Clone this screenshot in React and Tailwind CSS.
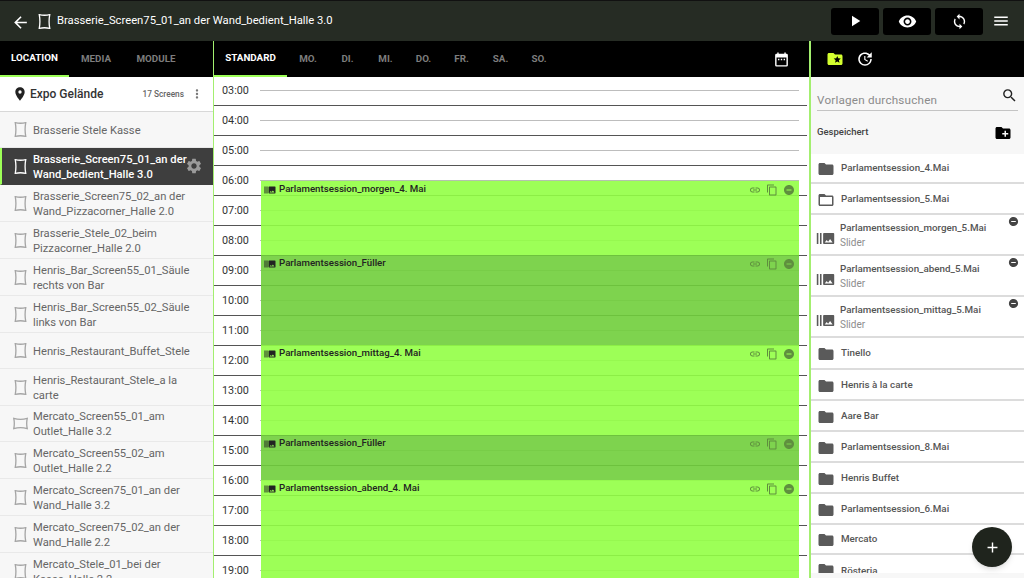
import React from 'react';
import {
  MdArrowBack, MdPlayArrow, MdVisibility, MdSync, MdMenu, MdPlace, MdMoreVert, MdSettings,
  MdFolderSpecial, MdUpdate, MdSearch, MdCreateNewFolder, MdFolder, MdFolderOpen,
  MdBurstMode, MdLink, MdContentCopy, MdRemoveCircle, MdAdd,
} from 'react-icons/md';

const screens = [
  ['Brasserie Stele Kasse', 'p', 'h-[36px]'],
  ['Brasserie_Screen75_01_an der Wand_bedient_Halle 3.0', 'p', 'h-[37px]', true],
  ['Brasserie_Screen75_02_an der Wand_Pizzacorner_Halle 2.0', 'p', 'h-[37px]'],
  ['Brasserie_Stele_02_beim Pizzacorner_Halle 2.0', 'p', 'h-[37px]'],
  ['Henris_Bar_Screen55_01_Säule rechts von Bar', 'p', 'h-[37px]'],
  ['Henris_Bar_Screen55_02_Säule links von Bar', 'p', 'h-[37px]'],
  ['Henris_Restaurant_Buffet_Stele', 'p', 'h-[36px]'],
  ['Henris_Restaurant_Stele_a la carte', 'p', 'h-[37px]'],
  ['Mercato_Screen55_01_am Outlet_Halle 3.2', 'l', 'h-[36px]'],
  ['Mercato_Screen55_02_am Outlet_Halle 2.2', 'p', 'h-[37px]'],
  ['Mercato_Screen75_01_an der Wand_Halle 3.2', 'p', 'h-[37px]'],
  ['Mercato_Screen75_02_an der Wand_Halle 2.2', 'p', 'h-[37px]'],
  ['Mercato_Stele_01_bei der Kasse_Halle 2.2', 'p', 'h-[37px]'],
];

const hours = ['03:00', '04:00', '05:00', '06:00', '07:00', '08:00', '09:00', '10:00', '11:00', '12:00', '13:00', '14:00', '15:00', '16:00', '17:00', '18:00', '19:00'];

const events = [
  { title: 'Parlamentsession_morgen_4. Mai', top: 'top-[104px]', height: 'h-[74px]', color: 'bg-[#92ff44]/90 shadow-[0_-1px_0_#b5c2ae]' },
  { title: 'Parlamentsession_Füller', top: 'top-[178px]', height: 'h-[90px]', color: 'bg-[#70ce3b]/90' },
  { title: 'Parlamentsession_mittag_4. Mai', top: 'top-[268px]', height: 'h-[90px]', color: 'bg-[#92ff44]/90' },
  { title: 'Parlamentsession_Füller', top: 'top-[358px]', height: 'h-[45px]', color: 'bg-[#70ce3b]/90' },
  { title: 'Parlamentsession_abend_4. Mai', top: 'top-[403px]', height: 'h-[100px]', color: 'bg-[#92ff44]/90' },
];

const templates = [
  { name: 'Parlamentsession_4.Mai', type: 'folder', h: 'h-[30px]' },
  { name: 'Parlamentsession_5.Mai', type: 'open', h: 'h-[31px]' },
  { name: 'Parlamentsession_morgen_5.Mai', type: 'slider', h: 'h-[41px]' },
  { name: 'Parlamentsession_abend_5.Mai', type: 'slider', h: 'h-[41px]' },
  { name: 'Parlamentsession_mittag_5.Mai', type: 'slider', h: 'h-[41px]' },
  { name: 'Tinello', type: 'folder', h: 'h-[32px]' },
  { name: 'Henris à la carte', type: 'folder', h: 'h-[31px]' },
  { name: 'Aare Bar', type: 'folder', h: 'h-[31px]' },
  { name: 'Parlamentsession_8.Mai', type: 'folder', h: 'h-[31px]' },
  { name: 'Henris Buffet', type: 'folder', h: 'h-[31px]' },
  { name: 'Parlamentsession_6.Mai', type: 'folder', h: 'h-[31px]' },
  { name: 'Mercato', type: 'folder', h: 'h-[30px]' },
];

// bowed rectangle, the little screen glyph
const ScreenIcon = ({ landscape, className }) => (
  <svg viewBox="0 0 16 16" className={className} fill="none" stroke="currentColor" strokeWidth="1.4">
    {landscape
      ? <path d="M0.8 2.5 Q8 4.6 15.2 2.5 Q14 8 15.2 13.5 Q8 11.4 0.8 13.5 Q2 8 0.8 2.5 Z" />
      : <path d="M2.4 0.7 Q8 2 13.6 0.7 Q12.2 8 13.6 15.3 Q8 14 2.4 15.3 Q3.8 8 2.4 0.7 Z" />}
  </svg>
);

const CalendarIcon = ({ className }) => (
  <svg viewBox="0 0 24 24" className={className} fill="currentColor">
    <path d="M19 4h-1V2h-2v2H8V2H6v2H5a2 2 0 0 0-2 2v14a2 2 0 0 0 2 2h14a2 2 0 0 0 2-2V6a2 2 0 0 0-2-2zm0 16H5V9h14v11z" />
    <path d="M7 11h2v2H7zM11 11h2v2h-2zM15 11h2v2h-2z" />
  </svg>
);

const TopButton = ({ children }) => (
  <button className="w-[48px] h-[27px] bg-black rounded-[3px] flex items-center justify-center text-white">{children}</button>
);

const Tab = ({ label, active, className }) => (
  <div className={`h-full pt-[1px] flex items-center justify-center text-[9.8px] font-bold ${active ? 'text-white border-b-2 border-[#9dff57]' : 'text-[#7d7d7d]'} ${className}`}>
    {label}
  </div>
);

export default function App() {
  return (
    <div className="w-[1024px] h-[578px] overflow-hidden flex flex-col bg-white font-['Roboto',sans-serif]">
      <header className="h-[41px] shrink-0 bg-[#262c24] border-t border-[#111] flex items-center text-white">
        <MdArrowBack className="ml-[11px] mt-[3px] w-[19px] h-[19px]" />
        <ScreenIcon className="ml-[7px] w-[15px] h-[15px]" />
        <span className="ml-[5px] pt-[1px] text-[11.25px]">Brasserie_Screen75_01_an der Wand_bedient_Halle 3.0</span>
        <div className="ml-auto flex items-center gap-[4px]">
          <TopButton><MdPlayArrow className="w-[18px] h-[18px]" /></TopButton>
          <TopButton><MdVisibility className="w-[19px] h-[19px]" /></TopButton>
          <TopButton><MdSync className="w-[17px] h-[17px]" /></TopButton>
        </div>
        <MdMenu className="ml-[9px] mr-[14px] w-[18px] h-[18px]" />
      </header>

      <div className="flex-1 min-h-0 flex">
        {/* locations */}
        <aside className="w-[213px] shrink-0 flex flex-col bg-[#f7f7f7]">
          <div className="h-[36px] shrink-0 bg-black flex">
            <Tab label="LOCATION" active className="w-[69px]" />
            <Tab label="MEDIA" className="w-[54px]" />
            <Tab label="MODULE" className="w-[66px]" />
          </div>
          <div className="h-[35px] shrink-0 bg-white border-b border-[#d8d8d8] flex items-center">
            <MdPlace className="ml-[12px] w-[16px] h-[16px] text-[#222]" />
            <span className="ml-[2px] text-[12px] font-medium text-[#333]">Expo Gelände</span>
            <span className="ml-auto text-[8.3px] font-medium text-[#666]">17 Screens</span>
            <MdMoreVert className="ml-[6px] mr-[9px] w-[14px] h-[14px] text-[#777]" />
          </div>
          {screens.map(([name, shape, h, selected]) => (
            <div key={name} className={`${h} shrink-0 relative flex items-center border-b ${selected ? 'bg-[#3e3e3e] border-[#3e3e3e] border-l-2 border-l-[#9dff57] text-white font-medium' : 'border-[#e9e9e9] text-[#666]'}`}>
              <ScreenIcon landscape={shape === 'l'} className={`${selected ? 'ml-[11px] text-white' : 'ml-[13px] text-[#a5a5a5]'} w-[15px] h-[15px] shrink-0`} />
              <span className="ml-[5px] pt-[1px] text-[11.2px] leading-[15px] w-[160px]">{name}</span>
              {selected && <MdSettings className="absolute right-[10px] top-[9px] w-[18px] h-[18px] text-[#9a9a9a]" />}
            </div>
          ))}
        </aside>

        {/* week plan */}
        <main className="flex-1 min-w-0 flex flex-col border-l border-r-2 border-[#a3ef6f]">
          <div className="h-[36px] shrink-0 bg-black flex items-center">
            <Tab label="STANDARD" active className="w-[73px]" />
            <Tab label="MO." className="w-[42px]" />
            <Tab label="DI." className="w-[37px]" />
            <Tab label="MI." className="w-[39px]" />
            <Tab label="DO." className="w-[37px]" />
            <Tab label="FR." className="w-[39px]" />
            <Tab label="SA." className="w-[39px]" />
            <Tab label="SO." className="w-[38px]" />
            <CalendarIcon className="ml-auto mr-[19px] w-[17px] h-[17px] text-white" />
          </div>
          <div className="flex-1 min-h-0 overflow-hidden relative">
            <div className="-mt-[1px]">
              {hours.map((hour) => (
                <div key={hour} className="h-[30px] border-b border-[#555] mr-[2px] flex items-center">
                  <span className="w-[46px] pl-[8px] text-[10.8px] text-[#333] pt-[2px]">{hour}</span>
                  <div className="w-[539px] h-px bg-[#bdbdbd]" />
                </div>
              ))}
            </div>
            {events.map((event, i) => (
              <div key={i} className={`absolute left-[47px] w-[538px] ${event.top} ${event.height} ${event.color}`}>
                <div className="h-[16px] pt-[1px] flex items-center">
                  <MdBurstMode className="ml-[3px] w-[12px] h-[12px] text-[#222]" />
                  <span className="ml-[3px] text-[9.7px] font-medium text-[#222]">{event.title}</span>
                  <div className="ml-auto mr-[4px] flex items-center gap-[5px] text-[#5f8f3e]">
                    <MdLink className="w-[12px] h-[12px]" />
                    <MdContentCopy className="w-[12px] h-[12px]" />
                    <MdRemoveCircle className="w-[12px] h-[12px]" />
                  </div>
                </div>
              </div>
            ))}
          </div>
        </main>

        {/* templates */}
        <aside className="w-[213px] shrink-0 flex flex-col bg-[#f7f7f7] relative">
          <div className="h-[36px] shrink-0 bg-black flex items-center">
            <MdFolderSpecial className="ml-[15px] w-[18px] h-[18px] text-[#d4ff2f]" />
            <MdUpdate className="ml-[12px] w-[18px] h-[18px] text-white" />
          </div>
          <div className="mx-[6px] mt-[9px] h-[25px] shrink-0 border-b border-[#c4c4c4] flex items-center justify-between">
            <span className="text-[11.7px] text-[#8b8b8b] tracking-[0.2px] pt-[6px]">Vorlagen durchsuchen</span>
            <MdSearch className="w-[17px] h-[17px] text-[#222] -mt-[5px]" />
          </div>
          <div className="h-[43px] shrink-0 flex items-center justify-between pl-[6px] pr-[12px]">
            <span className="text-[9.5px] font-medium text-[#444]">Gespeichert</span>
            <MdCreateNewFolder className="w-[18px] h-[18px] text-black" />
          </div>
          {templates.map((item) => (
            <div key={item.name} className={`${item.h} shrink-0 relative bg-white border-b-2 border-[#dcdcdc] flex items-center`}>
              {item.type === 'folder' && <MdFolder className="ml-[6px] mt-[2px] w-[18px] h-[18px] text-[#5a5a5a]" />}
              {item.type === 'open' && <MdFolderOpen className="ml-[6px] mt-[2px] w-[18px] h-[18px] text-[#5a5a5a]" />}
              {item.type === 'slider' && <MdBurstMode className="ml-[5px] mt-[8px] w-[19px] h-[19px] text-[#5a5a5a]" />}
              {item.type === 'slider' ? (
                <div className="ml-[5px] pt-[1px] flex flex-col">
                  <span className="text-[9.8px] leading-[15px] font-medium text-[#555]">{item.name}</span>
                  <span className="text-[10px] leading-[15px] text-[#8d8d8d]">Slider</span>
                  <MdRemoveCircle className="absolute right-[5px] top-[1px] w-[11px] h-[11px] text-[#444]" />
                </div>
              ) : (
                <span className="ml-[6px] pt-[1px] text-[9.8px] font-medium text-[#555]">{item.name}</span>
              )}
            </div>
          ))}
          {/* last row is cut by the panel edge */}
          <div className="h-[18px] shrink-0 bg-white overflow-hidden flex items-start">
            <MdFolder className="ml-[6px] mt-[6px] w-[18px] h-[18px] shrink-0 text-[#5a5a5a]" />
            <span className="ml-[6px] mt-[9px] text-[9.8px] font-medium text-[#555]">Rösteria</span>
          </div>
          <button className="absolute right-[12px] bottom-[11px] w-[40px] h-[40px] rounded-full bg-[#1f241d] shadow-md flex items-center justify-center text-white">
            <MdAdd className="w-[17px] h-[17px]" />
          </button>
        </aside>
      </div>
    </div>
  );
}
